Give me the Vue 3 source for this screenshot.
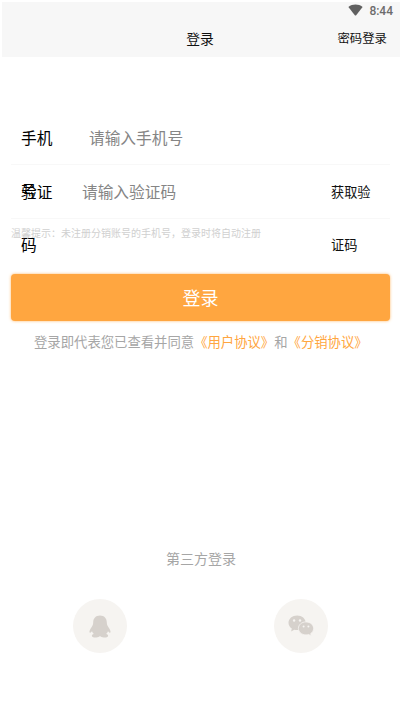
<script setup>
import { ref } from 'vue'

const phone = ref('')
const code = ref('')
</script>

<template>
  <div class="page">
    <header class="top">
      <div class="status">
        <svg class="wifi" width="15" height="12" viewBox="0 0 15 12">
          <path d="M0.4 2.9C4.6-.2 10.4-.2 14.6 2.9L8.2 11.2Q7.5 12 6.8 11.2Z" fill="#606060" />
        </svg>
        <span class="time">8:44</span>
      </div>
      <nav class="nav">
        <span></span>
        <h1 class="title">登录</h1>
        <a class="switch">密码登录</a>
      </nav>
    </header>

    <main class="form">
      <div class="row">
        <label class="label">手机号</label>
        <input v-model="phone" class="field phone" placeholder="请输入手机号" />
      </div>
      <div class="row">
        <label class="label">验证码</label>
        <input v-model="code" class="field code" placeholder="请输入验证码" />
        <span class="send">获取验证码</span>
      </div>
      <p class="hint">温馨提示：未注册分销账号的手机号，登录时将自动注册</p>
      <button class="submit">登录</button>
      <p class="agree">登录即代表您已查看并同意<a>《用户协议》</a>和<a>《分销协议》</a></p>
    </main>

    <footer class="third">
      <p class="third-title">第三方登录</p>
      <div class="icons">
        <div class="circle">
          <svg width="22" height="23" viewBox="0 0 22 23">
            <path d="M11 .5C6.8.5 4.2 3.4 4.2 7.3C4.2 9.2 3.8 10.4 2.7 12C1.2 14.1.2 16.1.5 17.3C.8 18.4 2 17.4 3 16.2C3.4 17.4 4 18.3 4.9 19C3.5 19.4 2.7 20 2.9 20.9C3.2 22.2 5.2 22.5 7.3 22.4C9 22.4 10.4 21.8 11 21C11.6 21.8 13 22.4 14.7 22.4C16.8 22.5 18.8 22.2 19.1 20.9C19.3 20 18.5 19.4 17.1 19C18 18.3 18.6 17.4 19 16.2C20 17.4 21.2 18.4 21.5 17.3C21.8 16.1 20.8 14.1 19.3 12C18.2 10.4 17.8 9.2 17.8 7.3C17.8 3.4 15.2.5 11 .5Z" fill="#d6d1cc" />
          </svg>
        </div>
        <div class="circle">
          <svg width="26" height="22" viewBox="0 0 26 22">
            <path d="M9.1.5C4.3.5.5 3.7.5 7.8C.5 10.2 1.8 12.3 3.8 13.6L3.1 16.5L6.3 14.7Q7.7 15.1 9.1 15.1C14 15.1 17.7 11.9 17.7 7.8S14 .5 9.1.5Z" fill="#d6d1cc" />
            <path d="M18 6.9C13.7 6.9 10.4 9.8 10.4 13.4S13.7 19.9 18 19.9Q19.4 19.9 20.7 19.5L23.2 21L22.7 18.6C24.5 17.4 25.6 15.5 25.6 13.4C25.6 9.8 22.3 6.9 18 6.9Z" fill="#d6d1cc" stroke="#f6f4f1" stroke-width=".8" />
            <g fill="#f6f4f1">
              <circle cx="6.1" cy="5.5" r="1.2" />
              <circle cx="12" cy="5.5" r="1.2" />
              <circle cx="15.6" cy="11.4" r="1" />
              <circle cx="20.4" cy="11.4" r="1" />
            </g>
          </svg>
        </div>
      </div>
    </footer>
  </div>
</template>

<style>
body {
  background: #fff;
}
</style>

<style scoped>
.page {
  width: 400px;
  height: 710px;
  overflow: hidden;
  display: flex;
  flex-direction: column;
  background: #fff;
  font-family: "Noto Sans CJK SC", sans-serif;
  color: #111;
}
p, h1 {
  margin: 0;
  font-weight: 400;
}
.top {
  height: 55px;
  margin: 2px 0 0 2px;
  background: #f7f7f7;
}
.status {
  height: 18px;
  padding-right: 7px;
  display: flex;
  justify-content: flex-end;
  align-items: center;
  gap: 6px;
}
.wifi {
  margin-bottom: 2px;
}
.time {
  font: 500 12px/18px Roboto, sans-serif;
  color: #6c6c6c;
}
.nav {
  height: 35px;
  padding: 0 13px 0 11px;
  display: grid;
  grid-template-columns: 1fr auto 1fr;
  align-items: center;
}
.title {
  font-size: 13.8px;
  line-height: 34px;
}
.switch {
  justify-self: end;
  font-size: 12.4px;
  line-height: 34px;
}
.form {
  padding: 54px 10px 0 11px;
}
.row {
  height: 54px;
  box-sizing: border-box;
  padding-left: 10px;
  display: flex;
  border-bottom: 1px solid #f8f8f8;
}
.label {
  flex: none;
  width: 40px;
  font-size: 15.7px;
  line-height: 53px;
  color: #000;
}
.field {
  height: 53px;
  padding: 0;
  border: 0;
  outline: 0;
  background: transparent;
  font-family: inherit;
  font-size: 15.7px;
}
.field::placeholder {
  color: #858585;
  opacity: 1;
}
.phone {
  width: 260px;
  margin-left: 28px;
}
.code {
  width: 248px;
  margin-left: 21px;
}
.send {
  flex: none;
  width: 48px;
  margin-left: auto;
  margin-right: 11px;
  font-size: 13.2px;
  line-height: 53px;
}
.hint {
  height: 55px;
  padding-top: 4px;
  box-sizing: border-box;
  font-size: 10px;
  line-height: 20px;
  color: #d0d0d0;
}
.submit {
  display: block;
  width: 100%;
  height: 47px;
  padding: 0 0 2px;
  border: 0;
  border-radius: 4px;
  background: #ffa640;
  box-shadow: 0 0 3px rgba(255, 166, 64, .8);
  color: #fff;
  font-family: inherit;
  font-size: 18px;
  line-height: 44px;
}
.agree {
  padding: 11px 0 0 23px;
  font-size: 13.35px;
  line-height: 20px;
  white-space: nowrap;
  color: #a6a6a6;
}
.agree a {
  color: #ffa640;
}
.third {
  margin-top: auto;
  padding-bottom: 57px;
}
.third-title {
  padding-left: 2px;
  text-align: center;
  font-size: 14px;
  line-height: 20px;
  color: #a6a6a6;
}
.icons {
  display: flex;
  justify-content: space-between;
  padding: 31px 72px 0 73px;
}
.circle {
  width: 54px;
  height: 54px;
  border-radius: 50%;
  display: flex;
  align-items: center;
  justify-content: center;
  background: #f6f4f1;
}
</style>
